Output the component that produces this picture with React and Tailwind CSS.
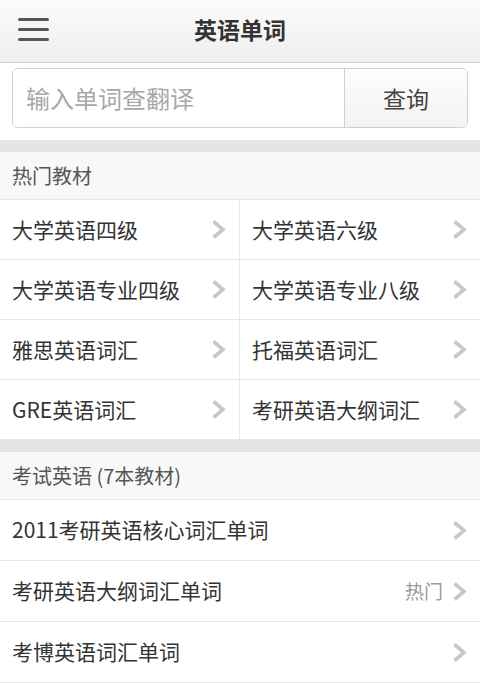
const font = { fontFamily: "'Noto Sans CJK SC', 'Liberation Sans', sans-serif" };

const hotBooks = [
  '大学英语四级', '大学英语六级',
  '大学英语专业四级', '大学英语专业八级',
  '雅思英语词汇', '托福英语词汇',
  'GRE英语词汇', '考研英语大纲词汇',
];

const examBooks = [
  { name: '2011考研英语核心词汇单词' },
  { name: '考研英语大纲词汇单词', tag: '热门' },
  { name: '考博英语词汇单词' },
];

function Arrow() {
  return (
    <svg width="15" height="21" viewBox="0 0 15 21" className="shrink-0">
      <polyline points="2.5,2.5 12,10.5 2.5,18.5" fill="none" stroke="#c8c8c8" strokeWidth="3.6" strokeLinejoin="miter" />
    </svg>
  );
}

export default function App() {
  return (
    <div className="w-[480px] h-[683px] overflow-hidden bg-white text-[#333]" style={font}>
      {/* Header */}
      <div className="h-[63px] flex items-center relative bg-gradient-to-b from-[#fbfbfb] to-[#efefef] border-b border-[#cfcfcf]">
        <div className="absolute left-[18px] top-[18px] flex flex-col gap-[7px]">
          <span className="block w-[31px] h-[3px] rounded-full bg-[#555]" />
          <span className="block w-[31px] h-[3px] rounded-full bg-[#555]" />
          <span className="block w-[31px] h-[3px] rounded-full bg-[#555]" />
        </div>
        <h1 className="flex-1 text-center text-[23px] font-bold text-[#333] -mt-[3px]">英语单词</h1>
      </div>

      {/* Search */}
      <div className="px-3 pt-[5px] pb-[12px]">
        <div className="h-[60px] flex border border-[#cfcfcf] rounded-[6px] overflow-hidden">
          <div className="flex-1 flex items-center pl-[13px] text-[24px] text-[#a8a8a8] bg-white">输入单词查翻译</div>
          <div className="w-[123px] flex items-center justify-center border-l border-[#cfcfcf] bg-gradient-to-b from-[#fdfdfd] to-[#f3f3f3] text-[23px] text-[#444]">查询</div>
        </div>
      </div>

      <div className="h-[12px] bg-[#e5e5e5]" />

      {/* Hot books */}
      <div className="h-[48px] flex items-center px-3 bg-[#f8f8f8] border-b border-[#e6e6e6] text-[20px] text-[#555]">热门教材</div>
      <div className="grid grid-cols-2">
        {hotBooks.map((b, i) => (
          <div
            key={b}
            className={`h-[60px] flex items-center justify-between pl-3 pr-[13px] border-b border-[#e6e6e6] ${i % 2 === 0 ? 'border-r' : ''}`}
          >
            <span className="text-[21px] text-[#333]">{b}</span>
            <Arrow />
          </div>
        ))}
      </div>

      <div className="h-[12px] bg-[#e5e5e5]" />

      {/* Exam books */}
      <div className="h-[48px] flex items-center px-3 bg-[#f8f8f8] border-b border-[#e6e6e6] text-[20px] text-[#555]">考试英语 (7本教材)</div>
      {examBooks.map((b) => (
        <div key={b.name} className="h-[61px] flex items-center pl-3 pr-[13px] border-b border-[#e6e6e6]">
          <span className="flex-1 text-[21px] text-[#333]">{b.name}</span>
          {b.tag && <span className="text-[19px] text-[#999] mr-[9px]">{b.tag}</span>}
          <Arrow />
        </div>
      ))}
    </div>
  );
}
